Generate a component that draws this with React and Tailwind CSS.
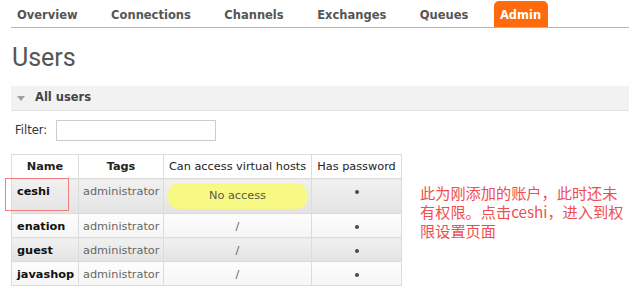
import React from "react";

const NAV = ["Overview", "Connections", "Channels", "Exchanges", "Queues"];

const USERS = [
  { name: "ceshi", tags: "administrator", vhost: null },
  { name: "enation", tags: "administrator", vhost: "/" },
  { name: "guest", tags: "administrator", vhost: "/" },
  { name: "javashop", tags: "administrator", vhost: "/" },
];

const NOTE = ["此为刚添加的账户，此时还未", "有权限。点击ceshi，进入到权", "限设置页面"];

function cellTone(index) {
  if (index % 2 === 0) return "bg-linear-to-b from-[#f1f1f1] to-[#e3e3e3]";
  return "bg-linear-to-b from-[#fdfdfd] to-[#f5f5f5]";
}

export default function App() {
  return (
    <div className="relative h-[290px] w-[644px] overflow-hidden bg-white font-['DejaVu_Sans',Verdana,sans-serif] text-[#333]">
      <nav className="ml-[11px] flex h-[28px] w-[618px] items-end gap-[21.5px] border-b border-[#f6a25a] pt-[1px]">
        {NAV.map((item) => (
          <div key={item} className="flex h-[26px] items-center px-[6px] pt-[3px] text-[11.5px] font-bold text-[#555]">
            {item}
          </div>
        ))}
        <div className="-ml-[2px] flex h-[26px] items-center rounded-t-[5px] bg-[#ff6a0d] pt-[3px] pl-[6px] pr-[7px] text-[11.5px] font-bold text-white">
          Admin
        </div>
      </nav>

      <h1 className="mt-[15px] pl-[12px] font-['Roboto',sans-serif] text-[25px] leading-[30px] font-normal text-[#555]">
        Users
      </h1>

      <div className="mt-[13px] ml-[11px] flex h-[25px] w-[618px] items-center border-b border-[#e2e2e2] bg-[#f2f2f2]">
        <span className="ml-[6px] h-0 w-0 border-x-[4px] border-t-[5px] border-x-transparent border-t-[#a0a0a0]" />
        <span className="ml-[10px] text-[11.5px] font-bold text-[#444]">All users</span>
      </div>

      <div className="mt-[9px] flex items-center">
        <span className="ml-[15px] text-[11.5px] text-[#333]">Filter:</span>
        <input className="ml-[9px] h-[21px] w-[160px] border border-[#cccccc] bg-white outline-none" />
      </div>

      <div className="mt-[13px] ml-[11px] flex">
        <table className="w-[390px] table-fixed border-collapse border border-[#d8d8d8] text-[11.3px] leading-[14px]">
          <colgroup>
            <col className="w-[67px]" />
            <col className="w-[85px]" />
            <col className="w-[148px]" />
            <col className="w-[90px]" />
          </colgroup>
          <thead>
            <tr className="h-[24px] bg-white text-[#222]">
              <th className="border border-[#dcdcdc] px-[2px] py-0 font-bold">Name</th>
              <th className="border border-[#dcdcdc] px-[2px] py-0 font-bold">Tags</th>
              <th className="border border-[#dcdcdc] px-[2px] py-0 font-normal whitespace-nowrap">Can access virtual hosts</th>
              <th className="border border-[#dcdcdc] px-[2px] py-0 font-normal whitespace-nowrap">Has password</th>
            </tr>
          </thead>
          <tbody>
            {USERS.map((user, index) => (
              <tr key={user.name}>
                <td className={`border border-[#dcdcdc] px-[5px] pt-[6px] pb-[3px] align-top font-bold text-[#111] ${cellTone(index)}`}>
                  {user.name}
                </td>
                <td className={`border border-[#dcdcdc] px-[4px] pt-[6px] pb-[3px] align-top whitespace-nowrap text-[#666] ${cellTone(index)}`}>
                  {user.tags}
                </td>
                {user.vhost ? (
                  <td className={`border border-[#dcdcdc] px-[5px] pt-[6px] pb-[3px] text-center align-top text-[#666] ${cellTone(index)}`}>
                    {user.vhost}
                  </td>
                ) : (
                  <td className={`border border-[#dcdcdc] p-[4px] ${cellTone(index)}`}>
                    <div className="flex h-[26px] items-center justify-center rounded-[10px] bg-[#f8f884] text-[#5a5a4a]">
                      No access
                    </div>
                  </td>
                )}
                <td className={`border border-[#dcdcdc] px-[5px] pt-[6px] pb-[3px] align-top ${cellTone(index)}`}>
                  <div className="flex h-[14px] items-center justify-center">
                    <span className="h-[4px] w-[4px] rounded-full bg-[#4a4a4a]" />
                  </div>
                </td>
              </tr>
            ))}
          </tbody>
        </table>

        <div className="ml-[18px] pt-[29px] font-['Noto_Sans_CJK_SC',sans-serif] text-[15.2px] whitespace-nowrap text-[#f04e4e]">
          {NOTE.map((line) => (
            <div key={line} className="h-[19px] leading-[19px]">
              {line}
            </div>
          ))}
        </div>
      </div>

      <div className="absolute top-[178px] left-[5px] h-[33px] w-[64px] border border-[#ee7f7f]" />
    </div>
  );
}
